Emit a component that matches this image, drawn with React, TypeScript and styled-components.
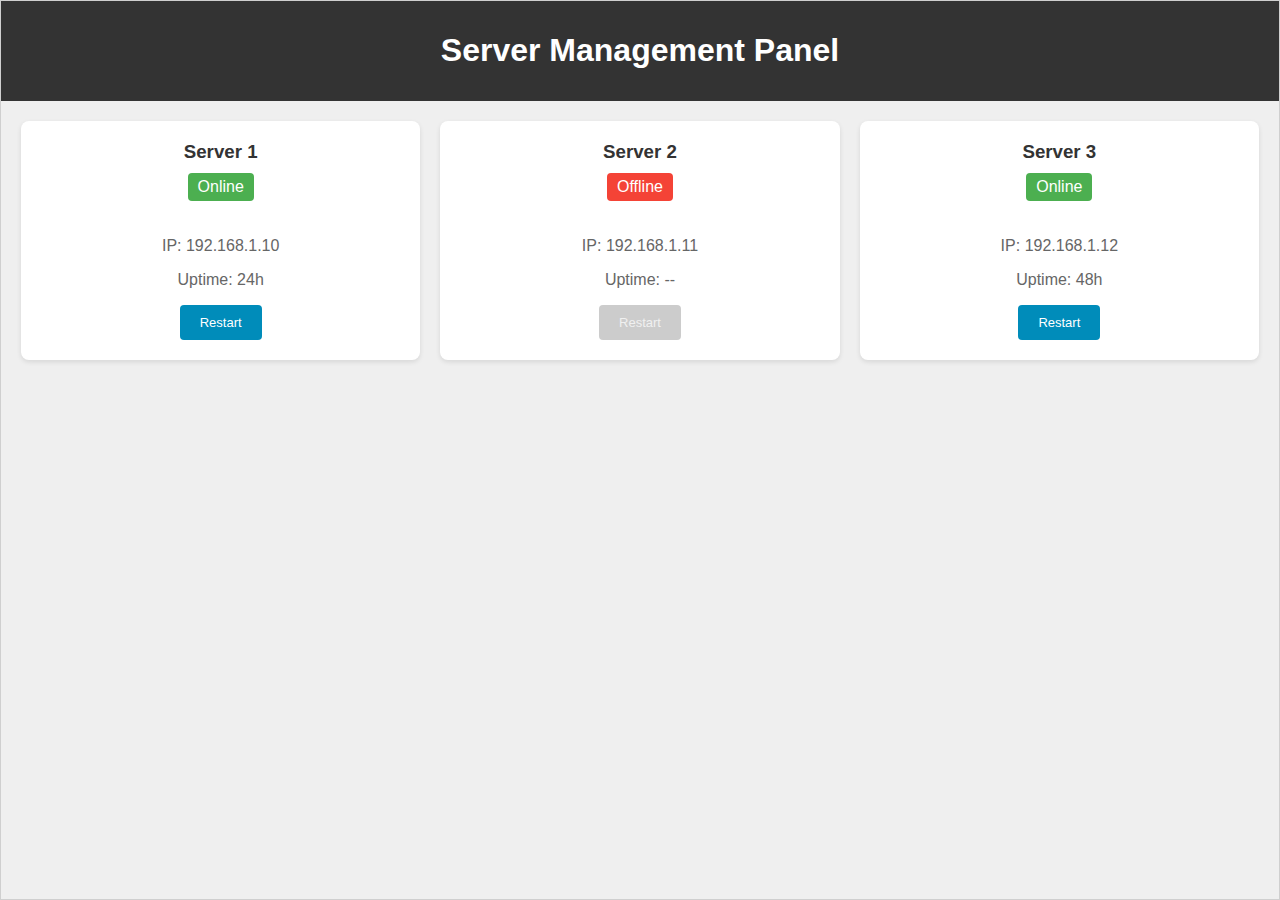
import React from 'react';
import styled, { createGlobalStyle } from 'styled-components';

const GlobalStyle = createGlobalStyle`
  html, body {
    margin: 0;
    padding: 0;
  }
  body {
    font-family: 'Liberation Sans', Arial, sans-serif;
    background: #f0f0f0;
  }
`;

const Page = styled.div`
  box-sizing: border-box;
  height: 900px;
  border: 1px solid #cfcfcf;
  background: #efefef;
`;

const Header = styled.header`
  height: 100px;
  background: #333;
  color: #fff;
  display: flex;
  align-items: center;
  justify-content: center;
`;

const Title = styled.h1`
  margin: 0 0 2px;
  font-size: 32px;
  font-weight: bold;
`;

const Grid = styled.main`
  display: grid;
  grid-template-columns: repeat(3, 1fr);
  gap: 20px;
  padding: 20px;
  align-items: start;
`;

const Card = styled.div`
  background: #fff;
  border-radius: 8px;
  box-shadow: 0 2px 5px rgba(0, 0, 0, 0.1);
  padding: 20px;
  text-align: center;
`;

const ServerName = styled.h3`
  margin: 0 0 10px;
  font-size: 18.72px;
  color: #333;
`;

const Status = styled.span<{ $online: boolean }>`
  display: inline-block;
  padding: 5px 10px;
  border-radius: 4px;
  font-size: 16px;
  line-height: 18px;
  color: #fff;
  background: ${p => (p.$online ? '#4caf50' : '#f44336')};
  margin-bottom: 20px;
`;

const Info = styled.p`
  margin: 16px 0;
  font-size: 16px;
  color: #666;
  line-height: 18px;
`;

const Button = styled.button`
  font-family: 'Liberation Sans', Arial, sans-serif;
  font-size: 13px;
  color: #fff;
  background: #008cba;
  border: none;
  border-radius: 4px;
  padding: 10px 20px;
  height: 35px;
  cursor: pointer;

  &:disabled {
    background: #cccccc;
    color: #f0f0f0;
    cursor: not-allowed;
  }
`;

const servers = [
  { name: 'Server 1', online: true, ip: '192.168.1.10', uptime: '24h' },
  { name: 'Server 2', online: false, ip: '192.168.1.11', uptime: '--' },
  { name: 'Server 3', online: true, ip: '192.168.1.12', uptime: '48h' },
];

function App() {
  return (
    <>
      <GlobalStyle />
      <Page>
        <Header>
          <Title>Server Management Panel</Title>
        </Header>
        <Grid>
          {servers.map(s => (
            <Card key={s.name}>
              <ServerName>{s.name}</ServerName>
              <Status $online={s.online}>{s.online ? 'Online' : 'Offline'}</Status>
              <Info>IP: {s.ip}</Info>
              <Info>Uptime: {s.uptime}</Info>
              <Button disabled={!s.online}>Restart</Button>
            </Card>
          ))}
        </Grid>
      </Page>
    </>
  );
}

export default App;
